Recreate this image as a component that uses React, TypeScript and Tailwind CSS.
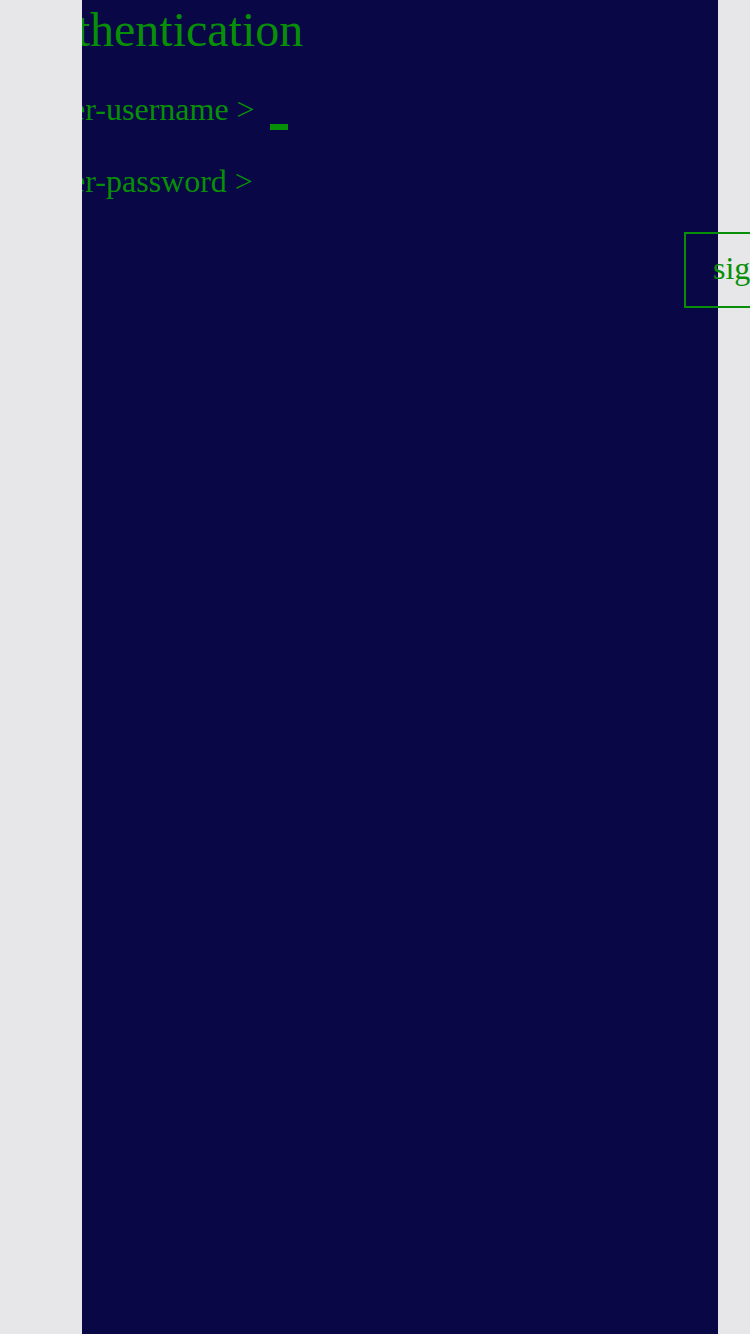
import React from "react";

export default function App() {
  return (
    <div
      className="min-h-screen w-[750px] overflow-hidden bg-[#e7e7e9] flex pl-[82px]"
      style={{ fontFamily: '"Liberation Serif", "Times New Roman", serif' }}
    >
      <div className="w-[636px] shrink-0 min-h-[1334px] bg-[#0a0746] text-[#078f07] [clip-path:inset(0_-300px_0_0)]">
        <h1 className="mt-[2px] text-[48px] leading-[55px] ml-[-64px] whitespace-nowrap">Authentication</h1>
        <div className="mt-[34px] flex items-start ml-[-50px] text-[32px] leading-[37px] whitespace-nowrap">
          <span>enter-username &gt;</span>
          <span className="ml-[15px] mt-[33px] w-[18px] h-[6px] bg-[#078f07]" />
        </div>
        <div className="mt-[33px] ml-[-50px] text-[32px] leading-[37px] whitespace-nowrap">
          enter-password &gt;
        </div>
        <div className="mt-[32px] flex">
          <button className="ml-[602px] h-[76px] flex items-start border-2 border-[#078f07] pt-[16px] pl-[27px] pr-[27px] text-[32px] leading-[37px] whitespace-nowrap">
            sign in
          </button>
        </div>
      </div>
    </div>
  );
}
